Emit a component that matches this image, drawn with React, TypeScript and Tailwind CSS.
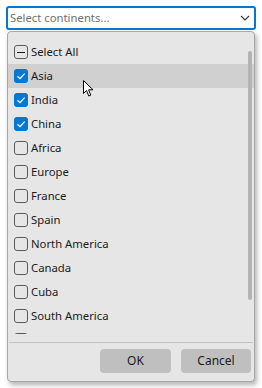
import React from 'react';

type Item = { label: string; state: 'checked' | 'unchecked' | 'mixed'; hover?: boolean };

const items: Item[] = [
  { label: 'Select All', state: 'mixed' },
  { label: 'Asia', state: 'checked', hover: true },
  { label: 'India', state: 'checked' },
  { label: 'China', state: 'checked' },
  { label: 'Africa', state: 'unchecked' },
  { label: 'Europe', state: 'unchecked' },
  { label: 'France', state: 'unchecked' },
  { label: 'Spain', state: 'unchecked' },
  { label: 'North America', state: 'unchecked' },
  { label: 'Canada', state: 'unchecked' },
  { label: 'Cuba', state: 'unchecked' },
  { label: 'South America', state: 'unchecked' },
  { label: 'Australia', state: 'unchecked' }
];

const CheckBox = ({ state }: { state: Item['state'] }) => {
  if (state === 'checked') {
    return (
      <span className="w-[14px] h-[14px] rounded-[3px] bg-[#0078d4] flex items-center justify-center shrink-0">
        <svg width="10" height="10" viewBox="0 0 10 10">
          <path d="M1.5 5.2 L4 7.6 L8.6 2.6" fill="none" stroke="white" strokeWidth="1.2" />
        </svg>
      </span>
    );
  }
  return (
    <span className="w-[14px] h-[14px] rounded-[3px] border border-[#5a5a5a] flex items-center justify-center shrink-0">
      {state === 'mixed' && <span className="w-[8px] h-[1px] bg-[#1b1b1b]" />}
    </span>
  );
};

const Row = ({ item }: { item: Item }) => (
  <div className={`h-[24px] flex items-center gap-[3px] pl-[6px] ${item.hover ? 'bg-[#d0d0d0]' : ''}`}>
    <CheckBox state={item.state} />
    <span className="text-[11.3px] text-[#1b1b1b] leading-none">{item.label}</span>
  </div>
);

const App = () => {
  return (
    <div
      className="w-[262px] h-[388px] bg-white px-[6px] pt-[6px] relative overflow-hidden"
      style={{ fontFamily: '"Segoe UI", "Noto Sans", sans-serif' }}
    >
      <div className="h-[24px] border-2 border-[#0078d4] rounded-[3px] bg-white flex items-center pl-[2px] pr-[4px]">
        <span className="text-[11.3px] text-[#707070] flex-1">Select continents...</span>
        <svg width="10" height="6" viewBox="0 0 10 6">
          <path d="M1 1 L5 5 L9 1" fill="none" stroke="#333" strokeWidth="1.1" />
        </svg>
      </div>

      <div className="mt-[1px] mx-[1px] h-[351px] bg-[#e6e6e6] border border-[#a8a8a8] rounded-[4px] shadow-[2px_3px_5px_rgba(0,0,0,0.3)] flex flex-col relative">
        <div className="h-[302px] overflow-hidden pt-[8px]">
          {items.map((item, index) => (
            <Row key={index} item={item} />
          ))}
        </div>
        <div className="h-[8px]" />
        <div className="absolute left-[240px] top-[19px] w-[4px] h-[249px] rounded-[2px] bg-[#b4b4b4]" />
        <div className="mx-[1px] h-[1px] bg-[#c4c4c4]" />
        <div className="flex-1 flex justify-end items-start pt-[6px] pr-[3px] gap-[10px]">
          <button className="w-[71px] h-[24px] rounded-[4px] bg-[#bfbfbf] text-[12px] text-[#1b1b1b]">OK</button>
          <button className="w-[70px] h-[24px] rounded-[4px] bg-[#bfbfbf] text-[12px] text-[#1b1b1b]">Cancel</button>
        </div>

        <svg className="absolute left-[75px] top-[48px]" width="12" height="18" viewBox="0 0 12 18">
          <path d="M0.5 0.5 L0.5 13.5 L3.5 10.5 L5.8 16 L7.8 15.2 L5.6 9.8 L10 9.8 Z" fill="white" stroke="black" strokeWidth="1" strokeLinejoin="round" />
        </svg>
      </div>
    </div>
  );
};

export default App;
